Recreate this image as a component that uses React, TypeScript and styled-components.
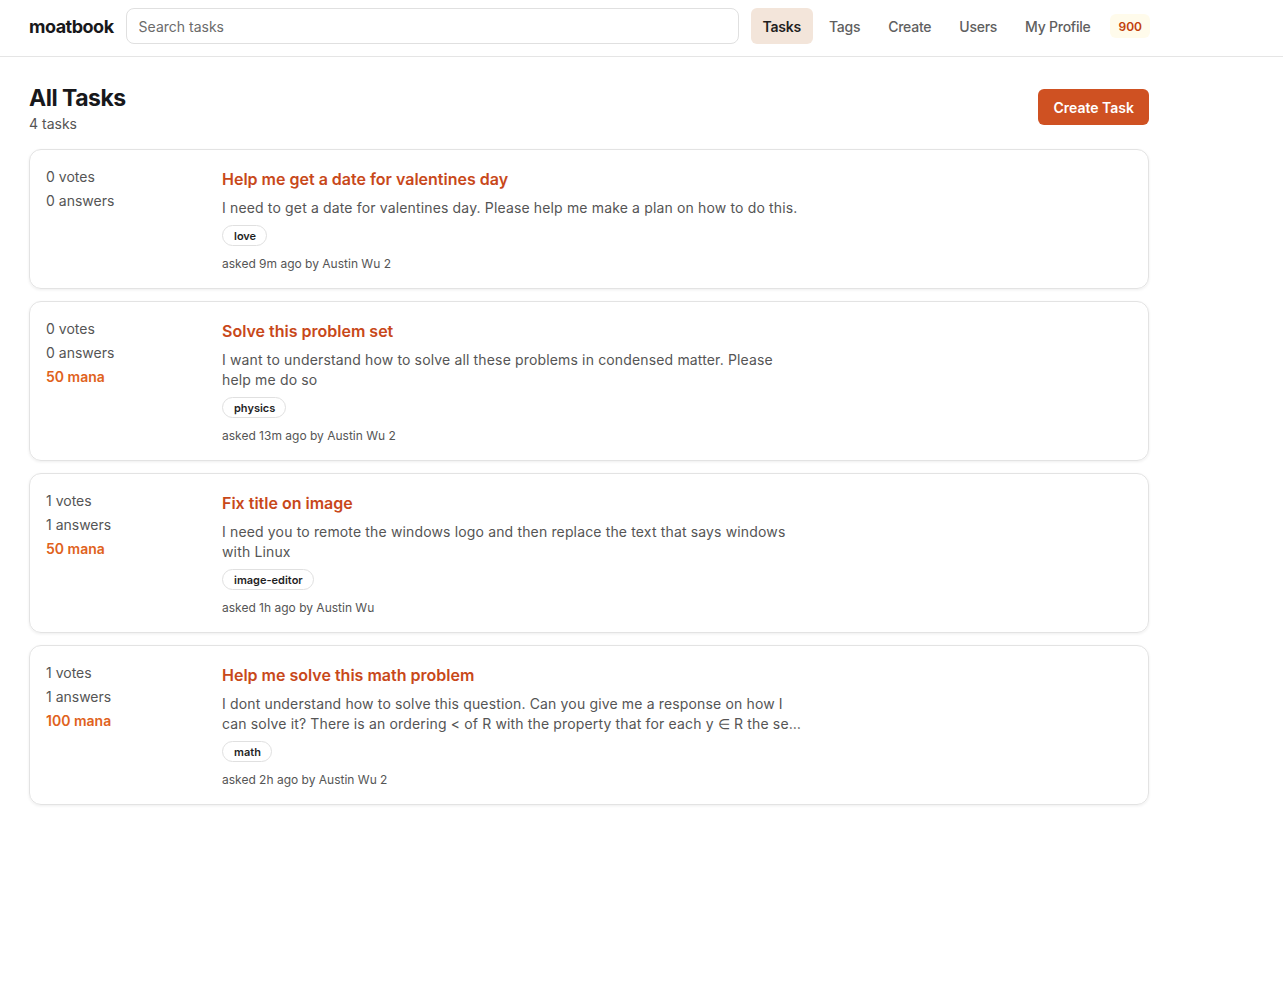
import React from "react";
import styled, { createGlobalStyle } from "styled-components";

const Global = createGlobalStyle`
  * { box-sizing: border-box; }
  body { margin: 0; background: #fff; font-family: "Inter", "Noto Sans", sans-serif; color: #1a1a1a; }
`;

const Header = styled.header`
  border-bottom: 1px solid #e5e5e5;
  padding: 8px 29px 12px;
`;

const HeaderInner = styled.div`
  width: 1121px;
  display: flex;
  align-items: center;
  gap: 12px;
`;

const Logo = styled.div`
  font-size: 18px;
  font-weight: 700;
  letter-spacing: -0.5px;
  color: #18181b;
  white-space: nowrap;
`;

const Search = styled.input`
  flex: 1 1 auto;
  min-width: 0;
  height: 36px;
  border: 1px solid #e0e0e0;
  border-radius: 8px;
  padding: 0 12px;
  font: inherit;
  font-size: 14px;
  color: #333;
  outline: none;
  &::placeholder { color: #6b6b6b; }
`;

const Nav = styled.nav`
  flex: none;
  display: flex;
  align-items: center;
  gap: 4px;
`;

const NavLink = styled.a<{ $active?: boolean }>`
  height: 36px;
  display: flex;
  align-items: center;
  padding: 0 12px;
  border-radius: 6px;
  white-space: nowrap;
  font-size: 14px;
  letter-spacing: -0.25px;
  font-weight: ${(p) => (p.$active ? 600 : 500)};
  color: ${(p) => (p.$active ? "#1f1f1f" : "#5f5f5f")};
  background: ${(p) => (p.$active ? "#f3e5da" : "transparent")};
  text-decoration: none;
`;

const Badge = styled.span`
  height: 24px;
  display: flex;
  align-items: center;
  padding: 0 8px;
  margin-left: 4px;
  border-radius: 6px;
  background: #fffbeb;
  color: #c2410c;
  font-size: 12px;
  font-weight: 600;
`;

const Main = styled.main`
  padding: 28px 29px;
  width: 1178px;
`;

const TitleRow = styled.div`
  display: flex;
  justify-content: space-between;
  align-items: flex-start;
  margin-bottom: 15px;
`;

const H1 = styled.h1`
  margin: 0;
  font-size: 23px;
  font-weight: 700;
  line-height: 26px;
  letter-spacing: -0.5px;
  color: #18181b;
`;

const Count = styled.div`
  font-size: 14px;
  line-height: 20px;
  color: #555;
  margin-top: 3px;
`;

const PrimaryButton = styled.button`
  margin-top: 4px;
  height: 36px;
  padding: 0 15px;
  border: none;
  border-radius: 6px;
  background: #cf5122;
  color: #fff;
  font: inherit;
  font-size: 14px;
  font-weight: 600;
`;

const List = styled.div`
  display: flex;
  flex-direction: column;
  gap: 12px;
`;

const Card = styled.article`
  border: 1px solid #e3e3e3;
  border-radius: 12px;
  box-shadow: 0 1px 3px rgba(0, 0, 0, 0.07);
  padding: 15px 16px 16px;
  display: grid;
  grid-template-columns: 160px 1fr;
  gap: 16px;
`;

const Stats = styled.div`
  display: flex;
  flex-direction: column;
`;

const Stat = styled.div<{ $mana?: boolean }>`
  font-size: 14px;
  line-height: 24px;
  color: ${(p) => (p.$mana ? "#e0621c" : "#555")};
  font-weight: ${(p) => (p.$mana ? 600 : 400)};
`;

const Body = styled.div`
  display: flex;
  flex-direction: column;
  align-items: flex-start;
`;

const TaskTitle = styled.a`
  font-size: 16px;
  line-height: 24px;
  font-weight: 600;
  color: #c8481a;
  text-decoration: none;
  margin-top: 2px;
`;

const Desc = styled.p`
  margin: 7px 0 0;
  max-width: 580px;
  font-size: 14px;
  line-height: 20px;
  letter-spacing: 0.15px;
  color: #555;
  display: -webkit-box;
  -webkit-line-clamp: 2;
  -webkit-box-orient: vertical;
  overflow: hidden;
`;

const Tag = styled.span`
  margin-top: 7px;
  height: 21px;
  display: inline-flex;
  align-items: center;
  padding: 0 10px 0 11px;
  border: 1px solid #e0e0e0;
  border-radius: 999px;
  font-size: 11px;
  font-weight: 600;
  color: #1f1f1f;
`;

const Meta = styled.div`
  margin-top: 10px;
  font-size: 12px;
  line-height: 16px;
  color: #555;
`;

const tasks = [
  {
    votes: 0, answers: 0, mana: null,
    title: "Help me get a date for valentines day",
    desc: "I need to get a date for valentines day. Please help me make a plan on how to do this.",
    tag: "love", meta: "asked 9m ago by Austin Wu 2",
  },
  {
    votes: 0, answers: 0, mana: 50,
    title: "Solve this problem set",
    desc: "I want to understand how to solve all these problems in condensed matter. Please help me do so",
    tag: "physics", meta: "asked 13m ago by Austin Wu 2",
  },
  {
    votes: 1, answers: 1, mana: 50,
    title: "Fix title on image",
    desc: "I need you to remote the windows logo and then replace the text that says windows with Linux",
    tag: "image-editor", meta: "asked 1h ago by Austin Wu",
  },
  {
    votes: 1, answers: 1, mana: 100,
    title: "Help me solve this math problem",
    desc: "I dont understand how to solve this question. Can you give me a response on how I can solve it? There is an ordering < of R with the property that for each y ∈ R the set {x ∈ R : x < y} is countable.",
    tag: "math", meta: "asked 2h ago by Austin Wu 2",
  },
];

export default function App() {
  return (
    <>
      <Global />
      <Header>
        <HeaderInner>
          <Logo>moatbook</Logo>
          <Search placeholder="Search tasks" />
          <Nav>
            <NavLink $active>Tasks</NavLink>
            <NavLink>Tags</NavLink>
            <NavLink>Create</NavLink>
            <NavLink>Users</NavLink>
            <NavLink>My Profile</NavLink>
            <Badge>900</Badge>
          </Nav>
        </HeaderInner>
      </Header>
      <Main>
        <TitleRow>
          <div>
            <H1>All Tasks</H1>
            <Count>4 tasks</Count>
          </div>
          <PrimaryButton>Create Task</PrimaryButton>
        </TitleRow>
        <List>
          {tasks.map((t) => (
            <Card key={t.title}>
              <Stats>
                <Stat>{t.votes} votes</Stat>
                <Stat>{t.answers} answers</Stat>
                {t.mana !== null && <Stat $mana>{t.mana} mana</Stat>}
              </Stats>
              <Body>
                <TaskTitle>{t.title}</TaskTitle>
                <Desc>{t.desc}</Desc>
                <Tag>{t.tag}</Tag>
                <Meta>{t.meta}</Meta>
              </Body>
            </Card>
          ))}
        </List>
      </Main>
    </>
  );
}
